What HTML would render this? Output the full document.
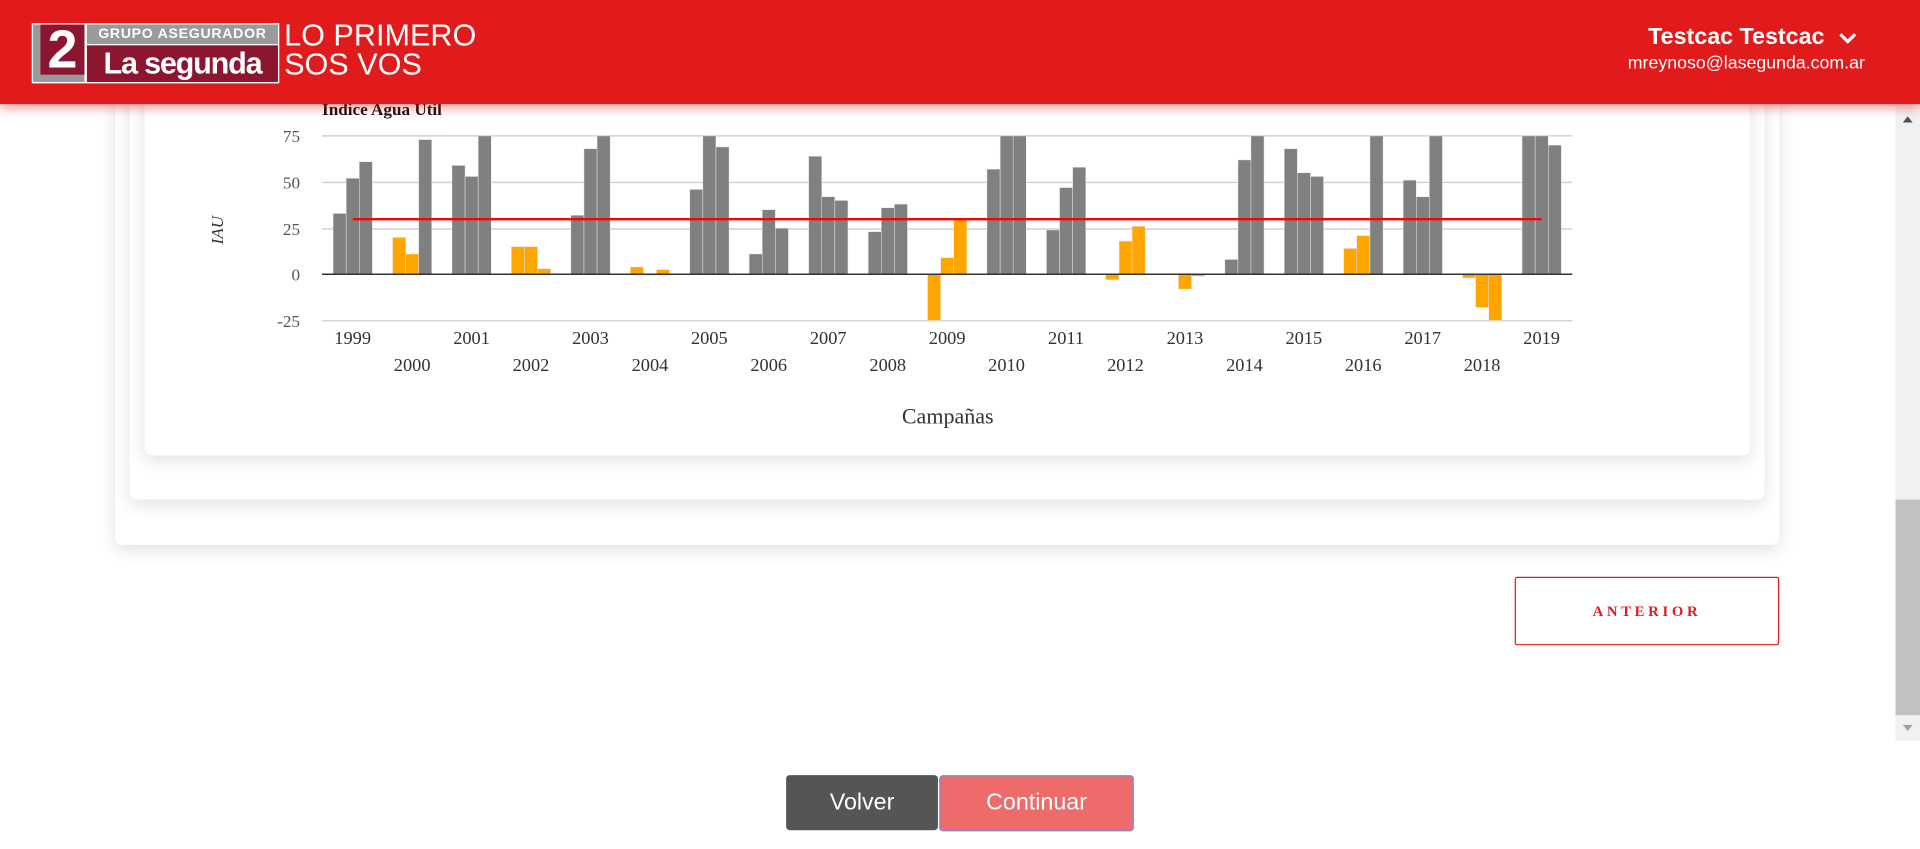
<!DOCTYPE html>
<html><head><meta charset="utf-8">
<style>
html,body{margin:0;padding:0;width:1920px;height:848px;overflow:hidden;background:#fff;font-family:"Liberation Sans",sans-serif}
#w{position:absolute;left:0;top:0;width:1568px;height:693px;transform:scale(1.22449);transform-origin:0 0}
.card{position:absolute;background:#fff;border-radius:6px;box-shadow:0 4px 14px rgba(0,0,0,.12)}
#hdr{position:absolute;left:0;top:0;width:1568px;height:85px;background:#e11b1b;box-shadow:0 3px 8px rgba(225,27,27,.45);z-index:5}
.abs{position:absolute}
</style></head><body>
<div id="w">
<div class="card" style="left:94px;top:-20px;width:1359px;height:465px"></div>
<div class="card" style="left:106px;top:-20px;width:1335px;height:428px"></div>
<div class="card" style="left:118px;top:-20px;width:1311px;height:392px"></div>
<svg class="abs" style="left:0;top:0" width="1548" height="400" font-family="Liberation Serif, serif">
<text x="263" y="94" font-size="14" font-weight="bold" fill="#111">Indice Agua Util</text>
<g stroke="#d0d0d0" stroke-width="1.2"><line x1="263" x2="1284" y1="111" y2="111"/><line x1="263" x2="1284" y1="149" y2="149"/><line x1="263" x2="1284" y1="187" y2="187"/><line x1="263" x2="1284" y1="262" y2="262"/></g>
<g font-size="14" fill="#555" text-anchor="end"><text x="245" y="116">75</text><text x="245" y="154">50</text><text x="245" y="192">25</text><text x="245" y="229">0</text><text x="245" y="267">-25</text></g>
<text transform="translate(182,188) rotate(-90)" font-size="14" font-style="italic" fill="#333" text-anchor="middle">IAU</text>
<g id="bars"></g>
<line x1="263" x2="1284" y1="224" y2="224" stroke="#333" stroke-width="1.2"/>
<line x1="288" x2="1259" y1="179" y2="179" stroke="#f00" stroke-width="2"/>
<g id="lbl" font-size="15" fill="#333" text-anchor="middle"></g>
<text x="774" y="346" font-size="18" fill="#333" text-anchor="middle">Campañas</text>
</svg>
<div id="hdr">
 <div class="abs" style="left:26px;top:19px;width:200px;height:47px;border:1px solid #fff;background:#fff"></div>
 <div class="abs" style="left:27px;top:20px;width:42px;height:47px;background:#9a9a9d"></div>
 <div class="abs" style="left:33px;top:20px;width:36px;height:41px;background:#8c1530;color:#fff;font:bold 44px/41px 'Liberation Sans',sans-serif;text-align:center">2</div>
 <div class="abs" style="left:71px;top:20px;width:156px;height:16px;background:#9a9a9d;color:#fff;font:bold 11.5px/16px 'Liberation Sans',sans-serif;text-align:center;letter-spacing:.6px">GRUPO ASEGURADOR</div>
 <div class="abs" style="left:71px;top:37px;width:156px;height:30px;background:#8c1530;color:#fff;font:bold 25px/30px 'Liberation Sans',sans-serif;text-align:center;letter-spacing:-1px">La segunda</div>
 <div class="abs" style="left:232px;top:17px;color:#fff;font:25px/24px 'Liberation Sans',sans-serif;font-weight:300">LO PRIMERO<br>SOS VOS</div>
 <div class="abs" style="right:78px;top:20px;color:#fff;font:bold 19px 'Liberation Sans',sans-serif">Testcac Testcac</div>
 <svg class="abs" style="left:1501px;top:26px" width="16" height="12"><path d="M2 2 L8 8 L14 2" stroke="#fff" stroke-width="2.6" fill="none"/></svg>
 <div class="abs" style="right:45px;top:44px;color:#fff;font:14.5px 'Liberation Sans',sans-serif">mreynoso@lasegunda.com.ar</div>
</div>
<div class="abs" style="left:1548px;top:85px;width:20px;height:520px;background:#f1f1f1"></div>
<div class="abs" style="left:1548px;top:408px;width:20px;height:176px;background:#c1c1c1"></div>
<svg class="abs" style="left:1548px;top:90px" width="20" height="14"><path d="M6 10 L10 5 L14 10Z" fill="#505050"/></svg>
<svg class="abs" style="left:1548px;top:588px" width="20" height="14"><path d="M6 4 L10 9 L14 4Z" fill="#a0a0a0"/></svg>
<div class="abs" style="left:1237px;top:471px;width:214px;height:54px;border:1px solid #e11b1b;border-radius:2px;color:#e11b1b;font:bold 12px/54px 'Liberation Serif',serif;letter-spacing:3px;text-align:center">ANTERIOR</div>
<div class="abs" style="left:642px;top:633px;width:124px;height:45px;background:#555;border-radius:3px;color:#fff;font:19px/45px 'Liberation Sans',sans-serif;text-align:center">Volver</div>
<div class="abs" style="left:767px;top:633px;width:157px;height:44px;background:#ee6b6b;border:1px solid #6b8fd6;border-radius:3px;color:#fff;font:19px/44px 'Liberation Sans',sans-serif;text-align:center">Continuar</div>
</div>
<script>
var d=[[33,52,61],[20,11,73],[59,53,75],[15,15,3],[32,68,75],[4,-0.6,2.5],[46,75,69],[11,35,25],[64,42,40],[23,36,38],[-25,9,30],[57,75,75],[24,47,58],[-3,18,26],[null,-8,-1],[8,62,75],[68,55,53],[14,21,75],[51,42,75],[-2,-18,-25],[75,75,70]];
var o=["ggg","oog","ggg","ooo","ggg","ooo","ggg","ggg","ggg","ggg","ooo","ggg","ggg","ooo","ooo","ggg","ggg","oog","ggg","ooo","ggg"];
var s='',l='';
for(var i=0;i<21;i++){var c=288+48.55*i;for(var j=0;j<3;j++){var v=d[i][j];if(v===null)continue;v=Math.max(-25,Math.min(75,v));var h=Math.abs(v)*1.507;var y=v>=0?224-h:224;var col=o[i][j]=='o'?'#ffa500':'#808080';s+='<rect x="'+(c-16+j*10.7).toFixed(1)+'" y="'+y.toFixed(1)+'" width="10.7" height="'+Math.max(h,0.8).toFixed(1)+'" fill="'+col+'" stroke="#e8e8e8" stroke-width="0.4"/>';}
l+='<text x="'+c.toFixed(1)+'" y="'+(i%2?303:281)+'">'+(1999+i)+'</text>';}
document.getElementById('bars').innerHTML=s;document.getElementById('lbl').innerHTML=l;
</script>
</body></html>
